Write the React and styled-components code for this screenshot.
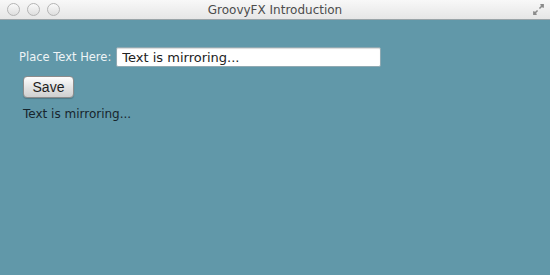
import React, {useState} from 'react';
import styled, {createGlobalStyle} from 'styled-components';

const GlobalStyle = createGlobalStyle`
    html, body {
        margin: 0;
        padding: 0;
        width: 100%;
        height: 100%;
        overflow: hidden;
    }
    body {
        font-family: "DejaVu Sans", "Liberation Sans", sans-serif;
    }
`;

const App = () => {
    const [text, setText] = useState("Text is mirroring...");
    const [saved, setSaved] = useState("Text is mirroring...");

    return (
    <Window>
        <GlobalStyle />
        <TitleBar>
            <Lights>
                <Light />
                <Light />
                <Light />
            </Lights>
            <Title>GroovyFX Introduction</Title>
            <Expand viewBox="0 0 14 14">
                <path d="M8 6 L12 2 M9 2 H12 V5" stroke="#8a8a8a" strokeWidth="1.6" fill="none" />
                <path d="M6 8 L2 12 M2 9 V12 H5" stroke="#8a8a8a" strokeWidth="1.6" fill="none" />
            </Expand>
        </TitleBar>
        <Content>
            <Row>
                <Label htmlFor="field">Place Text Here:</Label>
                <Field id="field" type="text" value={text} onChange={e => setText(e.target.value)} />
            </Row>
            <SaveButton onClick={() => setSaved(text)}>Save</SaveButton>
            <Mirror>{saved}</Mirror>
        </Content>
    </Window>
  );
}

const Window = styled.div`
    width: 550px;
    height: 275px;
    display: flex;
    flex-direction: column;
    background-color: #6198a9;
`;

const TitleBar = styled.div`
    height: 19px;
    display: flex;
    align-items: center;
    justify-content: space-between;
    padding: 0 5px 0 7px;
    background: linear-gradient(#f8f8f8, #e6e6e6);
    border-bottom: 1px solid #9aa4a8;
    position: relative;
`;

const Lights = styled.div`
    display: flex;
    gap: 7px;
`;

const Light = styled.span`
    width: 11px;
    height: 11px;
    border-radius: 50%;
    border: 1px solid #b4b4b4;
    background: linear-gradient(#fafafa, #dedede);
`;

const Title = styled.span`
    position: absolute;
    left: 0;
    right: 0;
    text-align: center;
    font-size: 12px;
    color: #4c4c4c;
    pointer-events: none;
`;

const Expand = styled.svg`
    width: 13px;
    height: 13px;
`;

const Content = styled.div`
    display: flex;
    flex-direction: column;
    align-items: flex-start;
    padding: 27px 0 0 19px;
`;

const Row = styled.div`
    display: flex;
    align-items: center;
    gap: 5px;
`;

const Label = styled.label`
    font-size: 11.5px;
    color: #eef4f6;
`;

const Field = styled.input`
    width: 265px;
    height: 20px;
    box-sizing: border-box;
    border: 1px solid #8fa9b2;
    border-radius: 2px;
    padding: 0 5px;
    font-family: "DejaVu Sans", sans-serif;
    font-size: 13px;
    color: #222;
    box-shadow: inset 0 1px 1px rgba(0, 0, 0, 0.15);
    outline: none;
`;

const SaveButton = styled.button`
    margin: 9px 0 0 4px;
    width: 51px;
    height: 22px;
    border: 1px solid #8c8c8c;
    border-radius: 4px;
    background: linear-gradient(#fdfdfd, #e2e2e2 55%, #cfcfcf);
    font-family: "Liberation Sans", sans-serif;
    font-size: 14px;
    color: #1e1e1e;
    padding: 0;
    box-shadow: 0 1px 1px rgba(0, 0, 0, 0.2);
`;

const Mirror = styled.span`
    margin: 9px 0 0 4px;
    font-size: 12px;
    color: #17252d;
`;

export default App;
